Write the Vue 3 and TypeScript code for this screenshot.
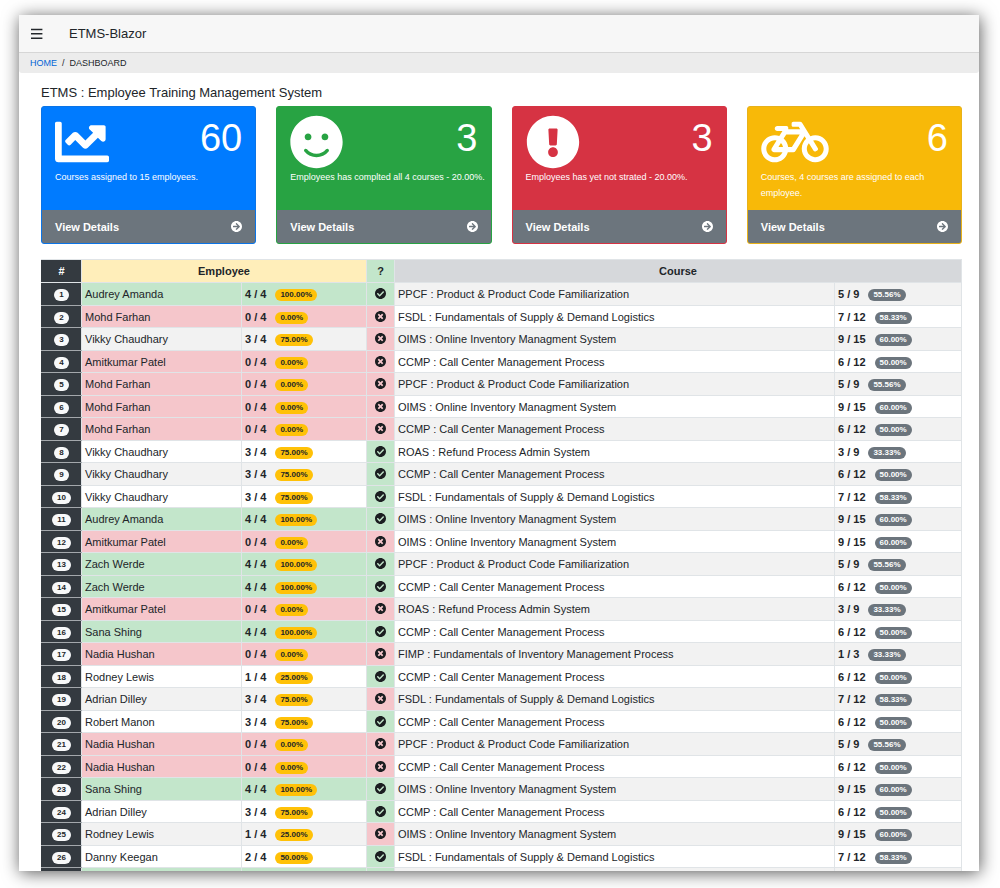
<script setup lang="ts">
interface Card {
  tone: string
  value: number
  text: string
  viewBox: string
  iconWidth: string
  path: string
}

interface Course {
  name: string
  done: number
  total: number
}

interface Row {
  employee: string
  done: number
  passed: boolean
  course: Course
}

const cards: Card[] = [
  {
    tone: 'blue',
    value: 60,
    text: 'Courses assigned to 15 employees.',
    viewBox: '0 0 512 512',
    iconWidth: '54',
    path: 'M496 384H64V80c0-8.84-7.16-16-16-16H16C7.16 64 0 71.16 0 80v336c0 17.67 14.33 32 32 32h464c8.84 0 16-7.16 16-16v-32c0-8.84-7.16-16-16-16zM464 96H345.94c-21.38 0-32.09 25.85-16.97 40.97l32.4 32.4L288 242.75l-73.37-73.37c-12.5-12.5-32.76-12.5-45.25 0l-68.69 68.69c-6.25 6.25-6.25 16.38 0 22.63l22.62 22.62c6.25 6.25 16.38 6.25 22.63 0L192 237.25l73.37 73.37c12.5 12.5 32.76 12.5 45.25 0l96-96 32.4 32.4c15.12 15.12 40.97 4.41 40.97-16.97V112c.01-8.84-7.15-16-16-16z',
  },
  {
    tone: 'green',
    value: 3,
    text: 'Employees has complted all 4 courses - 20.00%.',
    viewBox: '0 0 496 512',
    iconWidth: '53',
    path: 'M248 8C111 8 0 119 0 256s111 248 248 248 248-111 248-248S385 8 248 8zm80 168c17.7 0 32 14.3 32 32s-14.3 32-32 32-32-14.3-32-32 14.3-32 32-32zm-160 0c17.7 0 32 14.3 32 32s-14.3 32-32 32-32-14.3-32-32 14.3-32 32-32zm194.8 170.2C334.3 380.4 292.5 400 248 400s-86.3-19.6-114.8-53.8c-13.6-16.3 11-36.7 24.6-20.5 22.4 26.9 55.2 42.2 90.2 42.2s67.8-15.4 90.2-42.2c13.4-16.2 38.1 4.2 24.6 20.5z',
  },
  {
    tone: 'red',
    value: 3,
    text: 'Employees has yet not strated - 20.00%.',
    viewBox: '0 0 512 512',
    iconWidth: '54',
    path: 'M504 256c0 136.997-111.043 248-248 248S8 392.997 8 256C8 119.083 119.043 8 256 8s248 111.083 248 248zm-248 50c-25.405 0-46 20.595-46 46s20.595 46 46 46 46-20.595 46-46-20.595-46-46-46zm-43.673-165.346l7.418 136c.347 6.364 5.609 11.346 11.982 11.346h48.546c6.373 0 11.635-4.982 11.982-11.346l7.418-136c.375-6.874-5.098-12.654-11.982-12.654h-63.383c-6.884 0-12.356 5.78-11.981 12.654z',
  },
  {
    tone: 'yellow',
    value: 6,
    text: 'Courses, 4 courses are assigned to each employee.',
    viewBox: '0 0 640 512',
    iconWidth: '68',
    path: 'M512.509 192.001c-16.373-.064-32.03 2.955-46.436 8.495l-77.68-125.153A24 24 0 0 0 368.001 64h-64c-8.837 0-16 7.163-16 16v16c0 8.837 7.163 16 16 16h50.649l14.896 24H256.002v-16c0-8.837-7.163-16-16-16h-87.459c-13.441 0-24.777 10.999-24.536 24.437.232 13.044 10.876 23.563 23.995 23.563h48.726l-29.417 47.52c-13.433-4.83-27.904-7.483-42.992-7.52C58.094 191.83.412 249.012.002 319.236-.413 390.279 57.055 448 128.002 448c59.642 0 109.758-40.793 123.967-96h52.033a24 24 0 0 0 20.406-11.367L410.37 201.77l14.938 24.067c-25.455 23.448-41.385 57.081-41.307 94.437.145 68.833 57.899 127.051 126.729 127.719 70.606.685 128.181-55.803 129.255-125.996 1.086-70.941-56.526-129.72-127.476-129.996zM186.75 265.772c9.727 10.529 16.673 23.661 19.642 38.228h-43.306l23.664-38.228zM128.002 400c-44.112 0-80-35.888-80-80s35.888-80 80-80c5.869 0 11.586.653 17.099 1.859l-45.505 73.509C89.715 331.327 101.213 352 120.002 352h81.3c-12.37 28.225-40.562 48-73.3 48zm162.63-96h-35.624c-3.96-31.756-19.556-59.894-42.383-80.026L237.371 184h127.547l-74.286 120zm217.057 95.886c-41.036-2.165-74.049-35.692-75.627-76.755-.812-21.121 6.633-40.518 19.335-55.263l44.433 71.586c4.66 7.508 14.524 9.816 22.032 5.156l13.594-8.437c7.508-4.66 9.817-14.524 5.156-22.032l-44.468-71.643a79.901 79.901 0 0 1 19.858-2.497c44.112 0 80 35.888 80 80-.001 45.54-38.252 82.316-84.313 79.885z',
  },
]

const arrowPath =
  'M256 8c137 0 248 111 248 248S393 504 256 504 8 393 8 256 119 8 256 8zm-28.9 143.6l75.5 72.4H120c-13.3 0-24 10.7-24 24v16c0 13.3 10.7 24 24 24h182.6l-75.5 72.4c-9.7 9.3-9.9 24.8-.4 34.3l11 10.9c9.4 9.4 24.6 9.4 33.9 0L404.3 273c9.4-9.4 9.4-24.6 0-33.9L271.6 106.3c-9.4-9.4-24.6-9.4-33.9 0l-11 10.9c-9.5 9.6-9.3 25.1.4 34.4z'
const checkPath =
  'M504 256c0 136.967-111.033 248-248 248S8 392.967 8 256 119.033 8 256 8s248 111.033 248 248zM227.314 387.314l184-184c6.248-6.248 6.248-16.379 0-22.627l-22.627-22.627c-6.248-6.249-16.379-6.249-22.628 0L216 308.118l-70.059-70.059c-6.248-6.248-16.379-6.248-22.628 0l-22.627 22.627c-6.248 6.248-6.248 16.379 0 22.627l104 104c6.249 6.249 16.379 6.249 22.628.001z'
const crossPath =
  'M256 8C119 8 8 119 8 256s111 248 248 248 248-111 248-248S393 8 256 8zm121.6 313.1c4.7 4.7 4.7 12.3 0 17L338 377.6c-4.7 4.7-12.3 4.7-17 0L256 312l-65.1 65.6c-4.7 4.7-12.3 4.7-17 0L134.4 338c-4.7-4.7-4.7-12.3 0-17l65.6-65-65.6-65.1c-4.7-4.7-4.7-12.3 0-17l39.6-39.6c4.7-4.7 12.3-4.7 17 0l65 65.7 65.1-65.6c4.7-4.7 12.3-4.7 17 0l39.6 39.6c4.7 4.7 4.7 12.3 0 17L312 256l65.6 65.1z'

const PPCF: Course = { name: 'PPCF : Product & Product Code Familiarization', done: 5, total: 9 }
const FSDL: Course = { name: 'FSDL : Fundamentals of Supply & Demand Logistics', done: 7, total: 12 }
const OIMS: Course = { name: 'OIMS : Online Inventory Managment System', done: 9, total: 15 }
const CCMP: Course = { name: 'CCMP : Call Center Management Process', done: 6, total: 12 }
const ROAS: Course = { name: 'ROAS : Refund Process Admin System', done: 3, total: 9 }
const FIMP: Course = { name: 'FIMP : Fundamentals of Inventory Management Process', done: 1, total: 3 }

const row = (employee: string, done: number, passed: boolean, course: Course): Row => ({
  employee,
  done,
  passed,
  course,
})

const rows: Row[] = [
  row('Audrey Amanda', 4, true, PPCF),
  row('Mohd Farhan', 0, false, FSDL),
  row('Vikky Chaudhary', 3, false, OIMS),
  row('Amitkumar Patel', 0, false, CCMP),
  row('Mohd Farhan', 0, false, PPCF),
  row('Mohd Farhan', 0, false, OIMS),
  row('Mohd Farhan', 0, false, CCMP),
  row('Vikky Chaudhary', 3, true, ROAS),
  row('Vikky Chaudhary', 3, true, CCMP),
  row('Vikky Chaudhary', 3, true, FSDL),
  row('Audrey Amanda', 4, true, OIMS),
  row('Amitkumar Patel', 0, false, OIMS),
  row('Zach Werde', 4, true, PPCF),
  row('Zach Werde', 4, true, CCMP),
  row('Amitkumar Patel', 0, false, ROAS),
  row('Sana Shing', 4, true, CCMP),
  row('Nadia Hushan', 0, false, FIMP),
  row('Rodney Lewis', 1, true, CCMP),
  row('Adrian Dilley', 3, false, FSDL),
  row('Robert Manon', 3, true, CCMP),
  row('Nadia Hushan', 0, false, PPCF),
  row('Nadia Hushan', 0, false, CCMP),
  row('Sana Shing', 4, true, OIMS),
  row('Adrian Dilley', 3, true, CCMP),
  row('Rodney Lewis', 1, false, OIMS),
  row('Danny Keegan', 2, true, FSDL),
]

const percent = (done: number, total: number): string => ((done / total) * 100).toFixed(2) + '%'
const tint = (done: number): string => (done === 4 ? 'good' : done === 0 ? 'bad' : '')
</script>

<template>
  <div class="shell">
    <div class="window">
      <header class="topbar">
        <button class="menu" type="button" aria-label="Toggle menu">
          <svg width="12" height="12" viewBox="0 0 12 12" aria-hidden="true">
            <path d="M0 1.4H11.4M0 5.8H11.4M0 10.2H11.4" stroke="#24282c" stroke-width="1.5" />
          </svg>
        </button>
        <span class="brand">ETMS-Blazor</span>
      </header>

      <nav class="crumbs" aria-label="Breadcrumb">
        <a href="#">HOME</a>
        <span>/</span>
        <span>DASHBOARD</span>
      </nav>

      <main class="content">
        <h1>ETMS : Employee Training Management System</h1>

        <section class="cards">
          <article v-for="(card, i) in cards" :key="i" class="card" :class="card.tone">
            <div class="card-body">
              <div class="card-top">
                <svg :width="card.iconWidth" height="54" :viewBox="card.viewBox" aria-hidden="true">
                  <path :d="card.path" fill="#fff" />
                </svg>
                <span class="value">{{ card.value }}</span>
              </div>
              <p>{{ card.text }}</p>
            </div>
            <a class="card-foot" href="#">
              <span>View Details</span>
              <svg width="11" height="11" viewBox="8 8 496 496" aria-hidden="true">
                <path :d="arrowPath" fill="#fff" />
              </svg>
            </a>
          </article>
        </section>

        <table>
          <colgroup>
            <col class="c-num" />
            <col class="c-name" />
            <col class="c-count" />
            <col class="c-state" />
            <col />
            <col class="c-progress" />
          </colgroup>
          <thead>
            <tr>
              <th class="num" scope="col">#</th>
              <th class="h-employee" scope="col" colspan="2">Employee</th>
              <th class="good" scope="col">?</th>
              <th class="h-course" scope="col" colspan="2">Course</th>
            </tr>
          </thead>
          <tbody>
            <tr v-for="(r, i) in rows" :key="i">
              <th class="num" scope="row"><span class="badge light">{{ i + 1 }}</span></th>
              <td :class="tint(r.done)">{{ r.employee }}</td>
              <td :class="tint(r.done)">
                <div class="tally">
                  <b>{{ r.done }} / 4</b>
                  <span class="badge amber">{{ percent(r.done, 4) }}</span>
                </div>
              </td>
              <td class="state" :class="r.passed ? 'good' : 'bad'">
                <svg width="11" height="11" viewBox="8 8 496 496" role="img" :aria-label="r.passed ? 'Completed' : 'Not completed'">
                  <path :d="r.passed ? checkPath : crossPath" fill="#1b1e21" />
                </svg>
              </td>
              <td>{{ r.course.name }}</td>
              <td>
                <div class="tally">
                  <b>{{ r.course.done }} / {{ r.course.total }}</b>
                  <span class="badge gray">{{ percent(r.course.done, r.course.total) }}</span>
                </div>
              </td>
            </tr>
            <tr aria-hidden="true">
              <td class="num"></td>
              <td class="good"></td>
              <td class="good"></td>
              <td class="good"></td>
              <td></td>
              <td></td>
            </tr>
          </tbody>
        </table>
      </main>
    </div>
  </div>
</template>

<style>
body {
  margin: 0;
  background: #fff;
}
</style>

<style scoped>
.shell {
  box-sizing: border-box;
  height: 100vh;
  padding: 15px 21px 17px 19px;
  overflow: hidden;
  font-family: "Liberation Sans", Arial, sans-serif;
  font-size: 11px;
  line-height: 16px;
  color: #212529;
}

.window {
  display: flex;
  flex-direction: column;
  height: 100%;
  overflow: hidden;
  background: #fff;
  box-shadow: 1px 2px 16px rgba(0, 0, 0, 0.65);
}

.topbar {
  display: flex;
  flex: none;
  align-items: center;
  gap: 26px;
  height: 37px;
  padding: 0 12px;
  background: #f7f7f7;
  border-bottom: 1px solid #d6d6d6;
}

.menu {
  display: flex;
  padding: 0;
  border: 0;
  background: none;
}

.brand {
  font-size: 13px;
}

.crumbs {
  display: flex;
  flex: none;
  align-items: center;
  gap: 5px;
  height: 20px;
  padding: 0 11px;
  border-radius: 0 0 3px 3px;
  background: #ececec;
  font-size: 9px;
}

.crumbs a {
  color: #0366d6;
  text-decoration: none;
}

.content {
  flex: 1;
  min-height: 0;
  padding: 12px 17px 0 22px;
  overflow: hidden;
}

h1 {
  margin: 0 0 5px;
  font-size: 13px;
  font-weight: 400;
  line-height: 16px;
}

.cards {
  display: grid;
  grid-template-columns: repeat(4, 1fr);
  gap: 20px;
  margin-bottom: 15px;
}

.card {
  display: flex;
  flex-direction: column;
  overflow: hidden;
  border: 1px solid;
  border-radius: 3px;
  color: #fff;
}

.blue {
  background: #007bff;
  border-color: #0b74e6;
}

.green {
  background: #28a343;
  border-color: #28a343;
}

.red {
  background: #d63343;
  border-color: #d63343;
}

.yellow {
  background: #f8b908;
  border-color: #e8b21a;
}

.card-body {
  flex: 1;
  min-height: 95px;
  padding: 8px 4px 0 13px;
}

.card-top {
  display: flex;
  justify-content: space-between;
  padding-right: 9px;
}

.value {
  font-size: 38px;
  line-height: 46px;
}

.card p {
  margin: 0;
  font-size: 9px;
}

.card-foot {
  display: flex;
  align-items: center;
  justify-content: space-between;
  height: 33px;
  padding: 0 13px;
  background: #6c757d;
  color: #fff;
  font-weight: 700;
  text-decoration: none;
}

table {
  width: 100%;
  table-layout: fixed;
  border-collapse: collapse;
}

.c-num {
  width: 40px;
}

.c-name {
  width: 160px;
}

.c-count {
  width: 125px;
}

.c-state {
  width: 28px;
}

.c-progress {
  width: 127px;
}

tr {
  height: 22px;
}

thead tr,
tbody tr:nth-child(odd) {
  height: 23px;
}

tbody tr:nth-child(odd) {
  background: #f2f2f2;
}

td,
th {
  padding: 0 3px;
  border: 1px solid #e0e4e7;
  text-align: left;
  white-space: nowrap;
}

thead th,
th.num,
.state {
  text-align: center;
}

.num {
  border-left-color: #343a40;
  background: #343a40;
  color: #fff;
}

.h-employee {
  background: #ffeeba;
}

.h-course {
  background: #d6d8db;
}

.good {
  background: #c3e6cb;
}

.bad {
  background: #f5c6cb;
}

tbody .num {
  border-bottom-color: #a4a8ac;
}

.state svg {
  display: block;
  margin: 0 auto 1px;
}

.tally {
  display: flex;
  align-items: center;
  gap: 9px;
}

.badge {
  display: block;
  width: fit-content;
  margin-top: 2px;
  padding: 0 5px;
  border-radius: 6px;
  font-size: 8px;
  font-weight: 700;
  line-height: 12px;
}

.light {
  margin-right: auto;
  margin-left: auto;
  background: #f8f9fa;
  color: #212529;
}

.amber {
  background: #ffc107;
  color: #212529;
}

.gray {
  background: #6c757d;
  color: #fff;
}
</style>
